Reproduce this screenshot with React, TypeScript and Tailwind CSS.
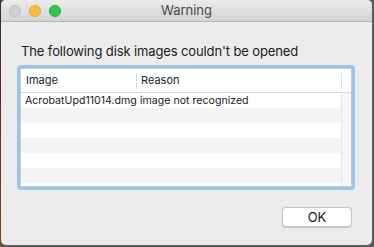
import React from "react";

const rows = [
  { image: "AcrobatUpd11014.dmg", reason: "image not recognized" },
  { image: "", reason: "" },
  { image: "", reason: "" },
  { image: "", reason: "" },
  { image: "", reason: "" },
  { image: "", reason: "" },
  { image: "", reason: "" },
];

export default function App() {
  return (
    <div
      className="w-[374px] h-[247px] flex bg-[#5b5b5b] overflow-hidden"
      style={{ fontFamily: "Inter, 'Liberation Sans', sans-serif" }}
    >
      <div className="w-[1px] h-full bg-gradient-to-b from-[#3a2a2a] via-[#6b2a1c] to-[#8a3a22]" />
      <div className="w-[371px] h-[245px] bg-[#ececec] rounded-[5px] overflow-hidden flex flex-col">
        <div className="relative h-[22px] shrink-0 flex items-center justify-center bg-gradient-to-b from-[#ebebeb] to-[#d4d4d4] border-b border-[#b5b5b5]">
          <div className="absolute left-[8px] top-[5px] flex gap-[8px]">
            <div className="w-[12px] h-[12px] rounded-full bg-[#d0d0d0] border border-[#bdbdbd]" />
            <div className="w-[12px] h-[12px] rounded-full bg-[#fdbb3a] border border-[#e0a22c]" />
            <div className="w-[12px] h-[12px] rounded-full bg-[#33c748] border border-[#27aa35]" />
          </div>
          <span className="text-[13px] text-[#4a4a4a] leading-none">Warning</span>
        </div>
        <div className="flex flex-col px-[16px] pt-[21px]">
          <div className="pl-[4px] text-[13px] leading-[16px] text-[#1a1a1a] tracking-[-0.12px]">
            The following disk images couldn't be opened
          </div>
          <div className="mt-[6px] w-[338px] h-[125px] rounded-[4px] border-[3px] border-[#9cc3ef] flex flex-col">
            <div className="flex-1 border border-[#c9c9c9] bg-white flex flex-col overflow-hidden">
              <div className="h-[24px] shrink-0 flex items-center border-b border-[#d9d9d9] text-[11px] text-[#262626]">
                <div className="w-[115px] pl-[5px]">Image</div>
                <div className="w-[1px] h-[16px] bg-[#dcdcdc]" />
                <div className="w-[204px] pl-[4px]">Reason</div>
                <div className="w-[1px] h-[16px] bg-[#dcdcdc]" />
                <div className="flex-1" />
              </div>
              <div className="flex flex-1 overflow-hidden">
                <div className="w-[320px] flex flex-col">
                  {rows.map((r, i) => (
                    <div
                      key={i}
                      className={`h-[15px] shrink-0 flex items-center text-[10.6px] text-[#1a1a1a] ${
                        i % 2 === 0 ? "bg-white" : "bg-[#f4f4f4]"
                      }`}
                    >
                      <div className="w-[116px] shrink-0 pl-[4px] whitespace-nowrap">{r.image}</div>
                      <div className="pl-[3px] whitespace-nowrap">{r.reason}</div>
                    </div>
                  ))}
                </div>
                <div className="flex-1 bg-[#f7f7f7] border-l border-[#e4e4e4]" />
              </div>
            </div>
          </div>
          <div className="flex justify-end mt-[17px] pr-[4px]">
            <button className="w-[70px] h-[20px] rounded-[4px] bg-white border border-[#c4c4c4] shadow-[0_0.5px_1px_rgba(0,0,0,0.15)] text-[13px] text-[#1a1a1a] leading-none flex items-center justify-center">
              OK
            </button>
          </div>
        </div>
      </div>
    </div>
  );
}
